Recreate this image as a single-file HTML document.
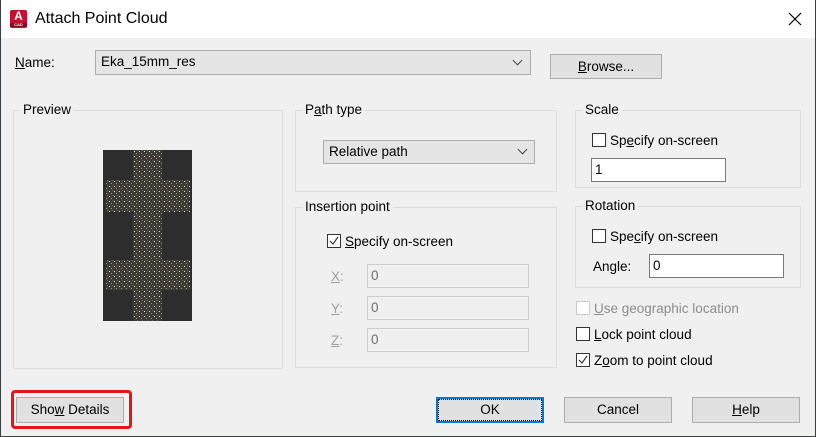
<!DOCTYPE html>
<html><head><style>
*{box-sizing:border-box;margin:0;padding:0}
body{width:816px;height:437px;background:#f0f0f0;font-family:"Liberation Sans",Arial,sans-serif;font-size:13.5px;color:#000;position:relative;overflow:hidden}
.a{position:absolute}
.frame{position:absolute;left:0;top:0;width:816px;height:437px;border:1px solid #3a3f45;border-top:none;pointer-events:none}
.title{left:0;top:0;width:816px;height:38px;background:#fff}
.grp{position:absolute;border:1px solid #dcdcdc}
.gl{position:absolute;background:#f0f0f0;padding:0 3px;top:-9px;left:6px;line-height:16px}
.combo{position:absolute;background:#e5e5e5;border:1px solid #adadad;padding-left:5px;line-height:22px}
.btn{position:absolute;background:#e1e1e1;border:1px solid #adadad;text-align:center;line-height:23px}
.inp{position:absolute;background:#fff;border:1px solid #7a7a7a;padding-left:3px;line-height:22px}
.dis{position:absolute;background:#f0f0f0;border:1px solid #ccc;padding-left:3px;line-height:21px;color:#6d6d6d}
.cb{position:absolute;width:14px;height:14px;border:1px solid #333;background:#fff}
.lbl{position:absolute;line-height:16px}
u{text-decoration:underline}
.chev{position:absolute;width:7px;height:7px;border-right:1px solid #444;border-bottom:1px solid #444;transform:rotate(45deg)}
</style></head><body>
<div class="a title"></div>
<div class="a" style="left:10px;top:10px;width:17px;height:18px;background:#c8102e;border-radius:2px;color:#fff;font-weight:bold;font-size:12px;text-align:center;line-height:13px">A<div style="font-size:4px;line-height:4px;background:#8a0b20">CAD</div></div>
<div class="lbl" style="left:35px;top:10px;font-size:16px;line-height:18px">Attach Point Cloud</div>
<svg class="a" style="left:788px;top:12px" width="14" height="14"><path d="M1 1L13 13M13 1L1 13" stroke="#000" stroke-width="1.2"/></svg>

<div class="lbl" style="left:15px;top:55px"><u>N</u>ame:</div>
<div class="combo" style="left:95px;top:50px;width:436px;height:25px;">Eka_15mm_res</div>
<div class="chev" style="left:514px;top:57px"></div>
<div class="btn" style="left:550px;top:54px;width:112px;height:25px"><u>B</u>rowse...</div>

<div class="grp" style="left:13px;top:110px;width:270px;height:259px"><div class="gl">Preview</div></div>
<svg class="a" style="left:103px;top:150px" width="89" height="171">
<defs><pattern id="p" width="5" height="5" patternUnits="userSpaceOnUse"><rect width="5" height="5" fill="#3c3a35"/><rect x="1" y="1" width="1" height="1" fill="#e8e2c8"/><rect x="3" y="3" width="1" height="1" fill="#a09878"/><rect x="4" y="0" width="1" height="1" fill="#6a6456"/></pattern></defs>
<rect width="89" height="171" fill="#2d2d2d"/>
<g fill="url(#p)"><rect x="30" y="0" width="29" height="171"/><rect x="3" y="30" width="84" height="32"/><rect x="3" y="110" width="84" height="30"/></g>
</svg>

<div class="grp" style="left:295px;top:110px;width:262px;height:82px"><div class="gl">P<u>a</u>th type</div></div>
<div class="combo" style="left:323px;top:140px;width:212px;height:24px">Relative path</div>
<div class="chev" style="left:519px;top:146px"></div>

<div class="grp" style="left:295px;top:207px;width:262px;height:161px"><div class="gl">Insertion point</div></div>
<div class="cb" style="left:327px;top:234px"></div>
<svg class="a" style="left:328px;top:235px" width="12" height="12"><path d="M2 6L5 9L10 2" stroke="#333" fill="none" stroke-width="1.2"/></svg>
<div class="lbl" style="left:345px;top:234px"><u>S</u>pecify on-screen</div>
<div class="lbl" style="left:331px;top:269px;color:#a0a0a0"><u>X</u>:</div>
<div class="dis" style="left:367px;top:264px;width:162px;height:24px">0</div>
<div class="lbl" style="left:331px;top:301px;color:#a0a0a0"><u>Y</u>:</div>
<div class="dis" style="left:367px;top:296px;width:162px;height:24px">0</div>
<div class="lbl" style="left:331px;top:333px;color:#a0a0a0"><u>Z</u>:</div>
<div class="dis" style="left:367px;top:328px;width:162px;height:24px">0</div>

<div class="grp" style="left:575px;top:110px;width:226px;height:78px"><div class="gl">Scale</div></div>
<div class="cb" style="left:592px;top:133px"></div>
<div class="lbl" style="left:610px;top:133px">Sp<u>e</u>cify on-screen</div>
<div class="inp" style="left:591px;top:158px;width:135px;height:24px">1</div>

<div class="grp" style="left:575px;top:206px;width:226px;height:82px"><div class="gl">Rotation</div></div>
<div class="cb" style="left:592px;top:229px"></div>
<div class="lbl" style="left:610px;top:229px">Spe<u>c</u>ify on-screen</div>
<div class="lbl" style="left:593px;top:259px">Angle:</div>
<div class="inp" style="left:649px;top:254px;width:135px;height:24px">0</div>

<div class="cb" style="left:576px;top:301px;border-color:#ccc"></div>
<div class="lbl" style="left:594px;top:301px;color:#8d8d8d"><u>U</u>se geographic location</div>
<div class="cb" style="left:576px;top:327px"></div>
<div class="lbl" style="left:594px;top:327px"><u>L</u>ock point cloud</div>
<div class="cb" style="left:576px;top:353px"></div>
<svg class="a" style="left:577px;top:354px" width="12" height="12"><path d="M2 6L5 9L10 2" stroke="#333" fill="none" stroke-width="1.2"/></svg>
<div class="lbl" style="left:594px;top:353px">Z<u>o</u>om to point cloud</div>

<div class="a" style="left:11px;top:390px;width:121px;height:39px;border:3px solid #e8141c;border-radius:4px"></div>
<div class="btn" style="left:16px;top:397px;width:108px;height:26px;line-height:24px">Sho<u>w</u> Details</div>
<div class="btn" style="left:436px;top:397px;width:108px;height:26px;border:2px solid #0078d7;line-height:20px"><div style="border:1px dotted #000;height:22px">OK</div></div>
<div class="btn" style="left:564px;top:397px;width:108px;height:26px;line-height:24px">Cancel</div>
<div class="btn" style="left:692px;top:397px;width:108px;height:26px;line-height:24px"><u>H</u>elp</div>
<div class="frame"></div>
</body></html>
